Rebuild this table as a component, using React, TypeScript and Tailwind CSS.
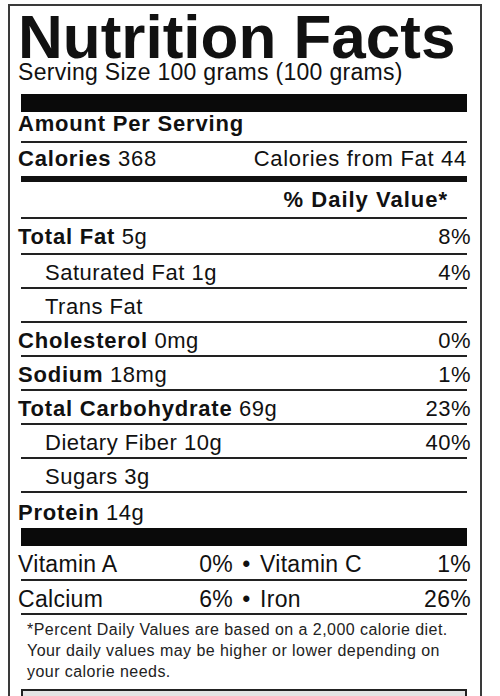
import React from 'react'

function Rule({ thick }: { thick?: boolean }) {
  return <div className={thick ? 'mx-[3px] h-[6px] bg-[#111]' : 'mx-[3px] h-[2px] bg-[#222]'} />
}

interface Nutrient {
  label: string
  amount?: string
  dv?: string
  sub?: boolean
  first?: boolean
}

const nutrients: Nutrient[] = [
  { label: 'Total Fat', amount: '5g', dv: '8%', first: true },
  { label: 'Saturated Fat', amount: '1g', dv: '4%', sub: true },
  { label: 'Trans Fat', sub: true },
  { label: 'Cholesterol', amount: '0mg', dv: '0%' },
  { label: 'Sodium', amount: '18mg', dv: '1%' },
  { label: 'Total Carbohydrate', amount: '69g', dv: '23%' },
  { label: 'Dietary Fiber', amount: '10g', dv: '40%', sub: true },
  { label: 'Sugars', amount: '3g', sub: true },
]

function Row({ n }: { n: Nutrient }) {
  return (
    <>
      <div
        className={
          'flex justify-between text-[22px] leading-[22px] tracking-[0.5px] ' +
          (n.first ? 'pt-[7px] pb-[5px]' : 'pt-[7px] pb-[3px]')
        }
      >
        <span className={n.sub ? 'pl-[27px]' : ''}>
          {n.sub ? (
            n.label
          ) : (
            <span className="font-bold tracking-[0.8px]">{n.label}</span>
          )}
          {n.amount ? ' ' + n.amount : ''}
        </span>
        <span className="-mr-[1px]">{n.dv}</span>
      </div>
      <Rule />
    </>
  )
}

function Vitamins({ a, av, b, bv, last }: { a: string; av: string; b: string; bv: string; last?: boolean }) {
  return (
    <>
      <div
        className={
          'flex text-[23px] leading-[22px] tracking-[0.3px] ' +
          (last ? 'pt-[7px] pb-[3px]' : 'pt-[7px] pb-[4px]')
        }
      >
        <div className="flex w-[215px] justify-between">
          <span>{a}</span>
          <span>{av}</span>
        </div>
        <div className="w-[27px] text-center">•</div>
        <div className="flex flex-1 justify-between">
          <span>{b}</span>
          <span className="-mr-[1px]">{bv}</span>
        </div>
      </div>
      <Rule />
    </>
  )
}

export default function App() {
  return (
    <div className="min-h-[696px] overflow-hidden bg-white font-['Liberation_Sans',Arial,sans-serif] text-[#111]">
      <div className="ml-[8px] mt-[4px] w-[474px] border-2 border-[#3a3a3a] pl-[8px] pr-[10px] pb-[20px]">
        <h1 className="mt-[7px] text-[62px] font-bold leading-[48px]">Nutrition Facts</h1>
        <div className="mt-[1px] text-[23px] leading-[20px] tracking-[0.3px]">Serving Size 100 grams (100 grams)</div>

        <div className="mx-[3px] mt-[12px] h-[18px] bg-[#0a0a0a]" />

        <div className="mt-[1px] pb-[6px] text-[22px] font-bold leading-[22px] tracking-[0.8px]">
          Amount Per Serving
        </div>
        <Rule />

        <div className="flex justify-between pt-[5px] pb-[6px] text-[22px] leading-[22px] tracking-[0.7px]">
          <span>
            <span className="font-bold tracking-[0.8px]">Calories</span> 368
          </span>
          <span className="mr-[3px]">Calories from Fat 44</span>
        </div>
        <Rule thick />

        <div className="pt-[7px] pb-[6px] pr-[22px] text-right text-[22px] font-bold leading-[22px] tracking-[1px]">
          % Daily Value*
        </div>
        <Rule />

        {nutrients.map((n) => (
          <Row key={n.label} n={n} />
        ))}

        <div className="pt-[9px] pb-[4px] text-[22px] leading-[22px] tracking-[0.5px]">
          <span className="font-bold tracking-[0.8px]">Protein</span> 14g
        </div>
        <div className="mx-[3px] h-[18px] bg-[#0a0a0a]" />

        <Vitamins a="Vitamin A" av="0%" b="Vitamin C" bv="1%" />
        <Vitamins a="Calcium" av="6%" b="Iron" bv="26%" last />

        <p className="whitespace-nowrap pl-[9px] pt-[4px] text-[16px] leading-[21px] tracking-[0.45px] text-[#222]">
          *Percent Daily Values are based on a 2,000 calorie diet.
          <br />
          Your daily values may be higher or lower depending on
          <br />
          your calorie needs.
        </p>

        <div className="mx-[3px] mt-[7px] h-[60px] border-2 border-[#222] bg-[#e4e4e4]" />
      </div>
    </div>
  )
}
